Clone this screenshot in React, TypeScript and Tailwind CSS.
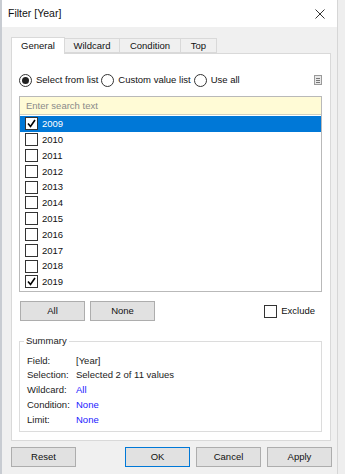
import React from "react";

const years = ["2009", "2010", "2011", "2012", "2013", "2014", "2015", "2016", "2017", "2018", "2019"];
const checked = ["2009", "2019"];

const Check = () => (
  <svg width="11" height="11" viewBox="0 0 11 11" className="block">
    <path d="M2 5.5 L4.5 8.5 L9 2" fill="none" stroke="#000" strokeWidth="1.6" />
  </svg>
);

const CheckBox: React.FC<{ on?: boolean }> = ({ on }) => (
  <div className="w-[13px] h-[13px] border border-[#333] bg-white flex items-center justify-center shrink-0">
    {on && <Check />}
  </div>
);

const Radio: React.FC<{ on?: boolean }> = ({ on }) => (
  <div className="w-[13px] h-[13px] rounded-full border border-[#333] bg-white flex items-center justify-center shrink-0">
    {on && <div className="w-[7px] h-[7px] rounded-full bg-[#222]" />}
  </div>
);

const Btn: React.FC<{ label: string; primary?: boolean; className?: string }> = ({ label, primary, className }) => (
  <div
    className={
      "h-[20px] w-[65px] flex items-center justify-center bg-[#e1e1e1] border text-[#111] " +
      (primary ? "border-[#0078d7]" : "border-[#adadad]") +
      (className ? " " + className : "")
    }
  >
    {label}
  </div>
);

const SummaryRow: React.FC<{ label: string; value: string; blue?: boolean }> = ({ label, value, blue }) => (
  <div className="flex h-[14.8px] items-center">
    <span className="w-[49px] shrink-0 text-[#222]">{label}</span>
    <span className={blue ? "text-[#1a1aff]" : "text-[#222]"}>{value}</span>
  </div>
);

export default function App() {
  return (
    <div
      className="w-[345px] h-[474px] bg-[#eeeeee] flex text-[9.5px] leading-none"
      style={{ fontFamily: '"Liberation Sans", Arial, sans-serif' }}
    >
      <div className="w-[2px] bg-[#c8ccd2]" />
      <div className="w-[336px] h-full flex flex-col bg-[#f0f0f0] border-r border-[#d6d6d6]">
        {/* title bar */}
        <div className="h-[27px] bg-white flex items-center justify-between pl-[6px] pr-[12px]">
          <span className="text-[10.5px] text-[#111]">Filter [Year]</span>
          <svg width="10" height="10" viewBox="0 0 10 10">
            <path d="M0.5 0.5 L9.5 9.5 M9.5 0.5 L0.5 9.5" stroke="#333" strokeWidth="1" />
          </svg>
        </div>

        {/* tabs */}
        <div className="flex items-end pl-[9px] h-[26px] pt-[9px]">
          <div className="h-[17px] w-[54px] bg-white border border-[#d9d9d9] border-b-0 flex items-center justify-center text-[#111] relative z-10 -mb-px">
            General
          </div>
          <div className="h-[15px] w-[55px] bg-[#f0f0f0] border border-[#d9d9d9] border-l-0 flex items-center justify-center text-[#111]">
            Wildcard
          </div>
          <div className="h-[15px] w-[61px] bg-[#f0f0f0] border border-[#d9d9d9] border-l-0 flex items-center justify-center text-[#111]">
            Condition
          </div>
          <div className="h-[15px] w-[36px] bg-[#f0f0f0] border border-[#d9d9d9] border-l-0 flex items-center justify-center text-[#111]">
            Top
          </div>
        </div>

        {/* panel */}
        <div className="ml-[9px] w-[320px] h-[388px] bg-white border border-[#d9d9d9] flex flex-col pl-[7px] pr-[7px]">
          <div className="h-[42px] flex items-center pt-[10px]">
            <Radio on />
            <span className="ml-[4px] text-[#111]">Select from list</span>
            <span className="ml-[3px]"><Radio /></span>
            <span className="ml-[4px] text-[#111]">Custom value list</span>
            <span className="ml-[3px]"><Radio /></span>
            <span className="ml-[4px] text-[#111]">Use all</span>
            <div className="ml-auto mr-[1px] w-[8px] h-[10px] border border-[#9a9a9a] bg-[#e8e8e8] flex flex-col items-center justify-center gap-[1px]">
              <div className="w-[4px] h-px bg-[#777]" />
              <div className="w-[4px] h-px bg-[#777]" />
              <div className="w-[4px] h-px bg-[#777]" />
            </div>
          </div>

          <div className="w-[303px] border border-[#b9b9b9]">
            <div className="h-[18px] bg-[#fffbd6] border-b border-[#d0d0c0] flex items-center pl-[6px] text-[#8a8a8a]">
              Enter search text
            </div>
            <div className="h-[176px] flex flex-col pt-px">
              {years.map((y, i) => (
                <div
                  key={y}
                  className={
                    "h-[15.8px] flex items-center pl-[5px] " +
                    (i === 0 ? "bg-[#0078d7] text-white" : "text-[#111]")
                  }
                >
                  <CheckBox on={checked.includes(y)} />
                  <span className="ml-[4px]">{y}</span>
                </div>
              ))}
            </div>
          </div>

          <div className="flex items-center mt-[9px] h-[20px] pl-px">
            <Btn label="All" />
            <Btn label="None" className="ml-[5px]" />
            <div className="ml-auto mr-[8px] flex items-center">
              <CheckBox />
              <span className="ml-[4px] text-[#111]">Exclude</span>
            </div>
          </div>

          <div className="mt-[20px] w-[303px] h-[91px] border border-[#dcdcdc] relative pt-[11px] pl-[7px]">
            <span className="absolute -top-[6px] left-[4px] bg-white px-[2px] text-[#222]">Summary</span>
            <SummaryRow label="Field:" value="[Year]" />
            <SummaryRow label="Selection:" value="Selected 2 of 11 values" />
            <SummaryRow label="Wildcard:" value="All" blue />
            <SummaryRow label="Condition:" value="None" blue />
            <SummaryRow label="Limit:" value="None" blue />
          </div>
        </div>

        {/* footer */}
        <div className="flex items-center mt-[6px] pl-[9px] pr-[5px]">
          <Btn label="Reset" />
          <Btn label="OK" primary className="ml-auto" />
          <Btn label="Cancel" className="ml-[6px]" />
          <Btn label="Apply" className="ml-[6px]" />
        </div>
      </div>
    </div>
  );
}
